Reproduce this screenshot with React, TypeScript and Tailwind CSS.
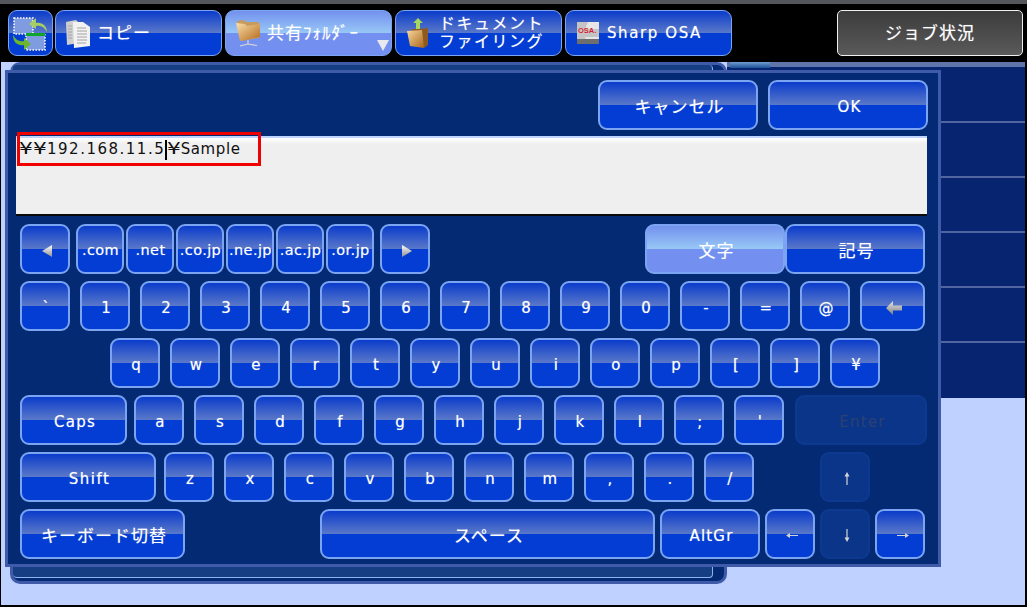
import React from "react";

const font = "font-['DejaVu_Sans','Noto_Sans_CJK_JP',sans-serif]";
const glow = "[text-shadow:0_0_1px_rgba(255,255,255,0.5)]";
const normal =
  "border-[#7ba5f2] bg-[linear-gradient(#0b3ccb_0%,#5b79c9_50%,#033dd3_50%,#033dd3_100%)] text-white";
const active =
  "border-[#7ba5f2] bg-[linear-gradient(#7391ee_0%,#98c8f6_50%,#7390f0_50%,#7390f0_100%)] text-white";
const disabled = "border-[#0d3a8f] bg-[#0b3589] text-[#2b4172]";
const latin = "text-[15px] tracking-[1.2px]";
const cjk = "text-[17px] tracking-[1px]";

function Key({
  w = "w-[50px]",
  kind = normal,
  type = latin,
  children,
  cls = "",
}: {
  w?: string;
  kind?: string;
  type?: string;
  children?: React.ReactNode;
  cls?: string;
}) {
  return (
    <div
      className={`${w} h-[50px] shrink-0 rounded-[9px] border-2 ${kind} ${type} ${kind === disabled ? "" : glow} flex items-center justify-center pl-[3px] pt-[5px] leading-none ${cls}`}
    >
      {children}
    </div>
  );
}

function Tri({ dir }: { dir: "l" | "r" }) {
  return (
    <svg width="14" height="14" viewBox="0 0 14 14">
      <defs>
        <linearGradient id={`tri${dir}`} x1="0" y1="0" x2="0" y2="1">
          <stop offset="0" stopColor="#ffffff" />
          <stop offset="1" stopColor="#8f8f8f" />
        </linearGradient>
      </defs>
      <path d={dir === "l" ? "M12 1v12L2 7z" : "M2 1v12l10-6z"} fill={`url(#tri${dir})`} />
    </svg>
  );
}

function Arrow({ d }: { d: "u" | "d" | "l" | "r" }) {
  const path = {
    u: "M8 2L5.500 6.500h1.900V15h1.200V6.500h1.900z",
    d: "M8 15l-2.500-4.500h1.900V2h1.200v8.500h1.900z",
    l: "M2 8.500L6 6v1.900h8v1.200H6V11z",
    r: "M15 8.500L11 6v1.900H3v1.200h8V11z",
  }[d];
  return (
    <svg width="16" height="17" viewBox="0 0 16 17">
      <path d={path} fill="#d4d4d4" />
    </svg>
  );
}

function Backspace() {
  return (
    <svg width="18" height="16" viewBox="0 0 18 16">
      <defs>
        <linearGradient id="bsp" x1="0" y1="0" x2="0" y2="1">
          <stop offset="0" stopColor="#e8e8e8" />
          <stop offset="1" stopColor="#7d7d7d" />
        </linearGradient>
      </defs>
      <path d="M1 8l7-7v4.500h9v5H8V15z" fill="url(#bsp)" />
    </svg>
  );
}

function Tab({
  kind = normal,
  icon,
  children,
}: {
  kind?: string;
  icon: React.ReactNode;
  children: React.ReactNode;
}) {
  return (
    <div
      className={`relative h-[46px] w-[167px] shrink-0 rounded-[9px] border-[1.500px] ${kind} ${glow} flex items-center pl-[9px] text-white`}
    >
      <span className="flex h-[30px] w-[26px] shrink-0 items-center justify-center">{icon}</span>
      {children}
    </div>
  );
}

function SyncIcon() {
  return (
    <svg width="36" height="37" viewBox="0 0 36 37">
      <rect x="2" y="3" width="19" height="16" fill="#7f9ce0" stroke="#fff" strokeWidth="1.500" strokeDasharray="1.500 1.500" />
      <rect x="14" y="20" width="19" height="15" fill="#7f9ce0" stroke="#fff" strokeWidth="1.500" strokeDasharray="1.500 1.500" />
      <path d="M14 18h19v3H14z" fill="#0fa52c" />
      <path d="M35 17c0-6-5-10-11-9V3l-7 6 7 5v-3c5-1 8 1 11 6z" fill="#a5cf60" />
      <path d="M1 20c0 8 5 11 11 10v5l7-6-7-6v3c-5 1-8-1-11-6z" fill="#6cb52e" />
    </svg>
  );
}

function CopyIcon() {
  return (
    <svg width="24" height="29" viewBox="0 0 24 29">
      <path d="M0 3l10-2 3 3v20L1 26z" fill="#cfcfcf" />
      <path d="M7 3l10 0 7 5v19l-16 2z" fill="#f2f2f2" />
      <path d="M11 9h9M11 12h10M11 15h10M11 18h10M11 21h10M11 24h9" stroke="#9a9a9a" strokeWidth="0.900" />
      <path d="M2 7h4M2 10h4M2 13h4M2 16h4M2 19h4" stroke="#999" strokeWidth="0.800" />
    </svg>
  );
}

function FolderIcon() {
  return (
    <svg width="24" height="28" viewBox="0 0 24 28">
      <defs>
        <linearGradient id="fld" x1="0" y1="0" x2="1" y2="1">
          <stop offset="0" stopColor="#fbe0ad" />
          <stop offset="1" stopColor="#b4691a" />
        </linearGradient>
      </defs>
      <path d="M1 2l7-1 2 2 13 0v16l-19 3z" fill="#c79a5e" />
      <path d="M0 4l9 1 2 2 13-2v13L4 22z" fill="url(#fld)" />
      <path d="M12 21v4M4 27l8-2 9 1.500" stroke="#d8d8d8" strokeWidth="1.200" fill="none" />
    </svg>
  );
}

function FilingIcon() {
  return (
    <svg width="24" height="32" viewBox="0 0 24 32">
      <defs>
        <linearGradient id="fld2" x1="0" y1="0" x2="1" y2="1">
          <stop offset="0" stopColor="#f8d9a0" />
          <stop offset="1" stopColor="#a9651c" />
        </linearGradient>
      </defs>
      <path d="M12 1l-5 5h3v8h4V6h3z" fill="#a6d860" />
      <path d="M5 12h8l9-1v17l-4 3z" fill="#8f5a1e" />
      <path d="M1 14l15-1 2 18-14-2z" fill="url(#fld2)" />
    </svg>
  );
}

function OsaIcon() {
  return (
    <svg width="22" height="22" viewBox="0 0 22 22">
      <rect width="22" height="22" fill="#c4c4c4" />
      <path d="M11 0h11v22H11l-3-7h14V7H8z" fill="#e6e6e6" />
      <rect y="17" width="22" height="5" fill="#6e6e6e" />
      <text x="1" y="11" fontSize="7.500" fontWeight="700" fill="#d01c2c" fontFamily="Liberation Sans, sans-serif">
        OSA.
      </text>
    </svg>
  );
}

function Yen() {
  return <span className="inline-block w-[14px] scale-x-[1.45] text-center">¥</span>;
}

function Row({ children, cls = "" }: { children: React.ReactNode; cls?: string }) {
  return <div className={`flex h-[50px] ${cls}`}>{children}</div>;
}

const num = ["1", "2", "3", "4", "5", "6", "7", "8", "9", "0", "-", "=", "@"];
const qw = ["q", "w", "e", "r", "t", "y", "u", "i", "o", "p", "[", "]", "¥"];
const as = ["a", "s", "d", "f", "g", "h", "j", "k", "l", ";", "'"];
const zx = ["z", "x", "c", "v", "b", "n", "m", ",", ".", "/"];
const dom = [".com", ".net", ".co.jp", ".ne.jp", ".ac.jp", ".or.jp"];

function Keyboard() {
  return (
    <div className="absolute left-[5px] top-[70px] flex h-[497px] w-[936px] flex-col border-[3px] border-[#3e5aa8] bg-[#042a74] pl-[8px] pt-[7px]">
      <div className="mr-[10px] flex justify-end gap-[10px]">
        <Key w="w-[160px]" type={cjk}>キャンセル</Key>
        <Key w="w-[160px]">OK</Key>
      </div>
      <div className="mt-[6px] flex h-[80px] w-[911px] shrink-0 items-start border-b-2 border-t-2 border-b-[#0a0a0a] border-t-[#bfd3ff] bg-[linear-gradient(#ffffff_0%,#efefef_8%,#efefef_100%)] pl-[3px] pt-[2px] text-[15px] leading-[18px] text-[#111]">
        <Yen />
        <Yen />
        <span className="tracking-[1.500px]">192.168.11.5</span>
        <span className="h-[20px] w-[1.500px] bg-black" />
        <Yen />
        <span className="tracking-[0.600px]">Sample</span>
      </div>
      <div className="absolute left-[9px] top-[59px] h-[34px] w-[244px] border-[3px] border-[#f00000]" />
      <div className="ml-[4px] mt-[8px] flex flex-col gap-[7px]">
        <Row>
          <Key cls="!pt-[3px]"><Tri dir="l" /></Key>
          <div className="ml-[6px] flex gap-[2px]">
            {dom.map((d) => (
              <Key key={d} w="w-[48px]" type="text-[14.500px] tracking-[0.400px]" cls="!pl-[1px] !pt-[3px]">{d}</Key>
            ))}
          </div>
          <Key cls="ml-[6px] !pt-[3px]"><Tri dir="r" /></Key>
          <Key w="w-[140px]" kind={active} type={cjk} cls="ml-[215px]">文字</Key>
          <Key w="w-[140px]" type={cjk}>記号</Key>
        </Row>
        <Row cls="gap-[10px]">
          <Key>`</Key>
          {num.map((k) => <Key key={k}>{k}</Key>)}
          <Key w="w-[65px]" cls="!pt-[3px]"><Backspace /></Key>
        </Row>
        <Row cls="gap-[10px] pl-[90px]">
          {qw.map((k) => <Key key={k}>{k}</Key>)}
        </Row>
        <Row>
          <Key w="w-[107px]">Caps</Key>
          <div className="ml-[7px] flex gap-[10px]">
            {as.map((k) => <Key key={k}>{k}</Key>)}
          </div>
          <Key w="w-[132px]" kind={disabled} cls="ml-[11px]">Enter</Key>
        </Row>
        <Row>
          <Key w="w-[136px]" type="text-[15px] tracking-[1.500px]">Shift</Key>
          <div className="ml-[8px] flex gap-[10px]">
            {zx.map((k) => <Key key={k}>{k}</Key>)}
          </div>
          <Key kind={disabled} cls="ml-[66px] !pt-[3px]"><Arrow d="u" /></Key>
        </Row>
        <Row>
          <Key w="w-[165px]" type={cjk}>キーボード切替</Key>
          <Key w="w-[335px]" type={cjk} cls="ml-[135px]">スペース</Key>
          <Key w="w-[100px]" cls="ml-[5px]">AltGr</Key>
          <Key cls="ml-[5px] !pt-[3px]"><Arrow d="l" /></Key>
          <Key kind={disabled} cls="ml-[5px] !pt-[3px]"><Arrow d="d" /></Key>
          <Key cls="ml-[5px] !pt-[3px]"><Arrow d="r" /></Key>
        </Row>
      </div>
    </div>
  );
}

export default function App() {
  return (
    <div className={`relative flex h-[607px] w-[1027px] flex-col overflow-hidden bg-black ${font}`}>
      <div className="h-[4px] shrink-0 bg-[#55555c]" />
      <div className="flex h-[58px] shrink-0 items-center pl-[7.500px] pr-[4px]">
        <div className={`flex h-[46px] w-[45px] shrink-0 items-center justify-center rounded-[9px] border-[1.500px] ${normal}`}>
          <SyncIcon />
        </div>
        <div className="ml-[2.500px] flex gap-[3px]">
          <Tab icon={<CopyIcon />}>
            <span className={`ml-[6px] pt-[1px] ${cjk}`}>コピー</span>
          </Tab>
          <Tab kind={active} icon={<FolderIcon />}>
            <span className={`ml-[6px] whitespace-nowrap pt-[1px] ${cjk}`}>共有ﾌｫﾙﾀﾞｰ</span>
            <span className="absolute bottom-[4px] right-[2px] h-0 w-0 border-x-[6px] border-t-[11px] border-x-transparent border-t-[#e8e8ee]" />
          </Tab>
          <Tab icon={<FilingIcon />}>
            <span className="ml-[8px] text-center text-[16px] leading-[18px] tracking-[1.500px]">
              ドキュメント<br />ファイリング
            </span>
          </Tab>
          <Tab icon={<OsaIcon />}>
            <span className="ml-[6px] pt-[1px] text-[15px] tracking-[1.600px]">Sharp OSA</span>
          </Tab>
        </div>
        <div className={`ml-auto flex h-[46px] w-[186px] items-center justify-center rounded-[5px] border-[1.500px] border-[#f0f0f0] bg-[linear-gradient(#3c3c3c,#5a5a5a)] pt-[1px] text-white ${cjk} ${glow}`}>
          ジョブ状況
        </div>
      </div>
      <div className="ml-[1px] mr-[2px] flex h-[543px] shrink-0 bg-[#bfd2ff]">
        <div className="ml-[9px] flex h-[522px] w-[717px] shrink-0 rounded-[10px] border-[3px] border-[#3e5aa8] bg-[#042a74] pb-[3px]">
          <div className="h-full w-[700px] rounded-[4px] border-b border-r border-[#8fb3ee] bg-[#163f83]" />
        </div>
        <div className="relative flex h-[336px] flex-1 flex-col border-t-[5px] border-[#5f74ab] bg-[#06246f]">
          <div className="absolute left-[3px] top-[-5px] h-[6px] w-[40px] bg-[linear-gradient(#6f9fd0,#1d4f98)]" />
          <div className="h-[56px] border-b-2 border-[#50659f]" />
          {[0, 1, 2].map((i) => (
            <div key={i} className="h-[55px] border-b-2 border-[#50659f]" />
          ))}
          <div className="h-[55px] border-b-2 border-[#50659f]" />
        </div>
      </div>
      <Keyboard />
    </div>
  );
}
